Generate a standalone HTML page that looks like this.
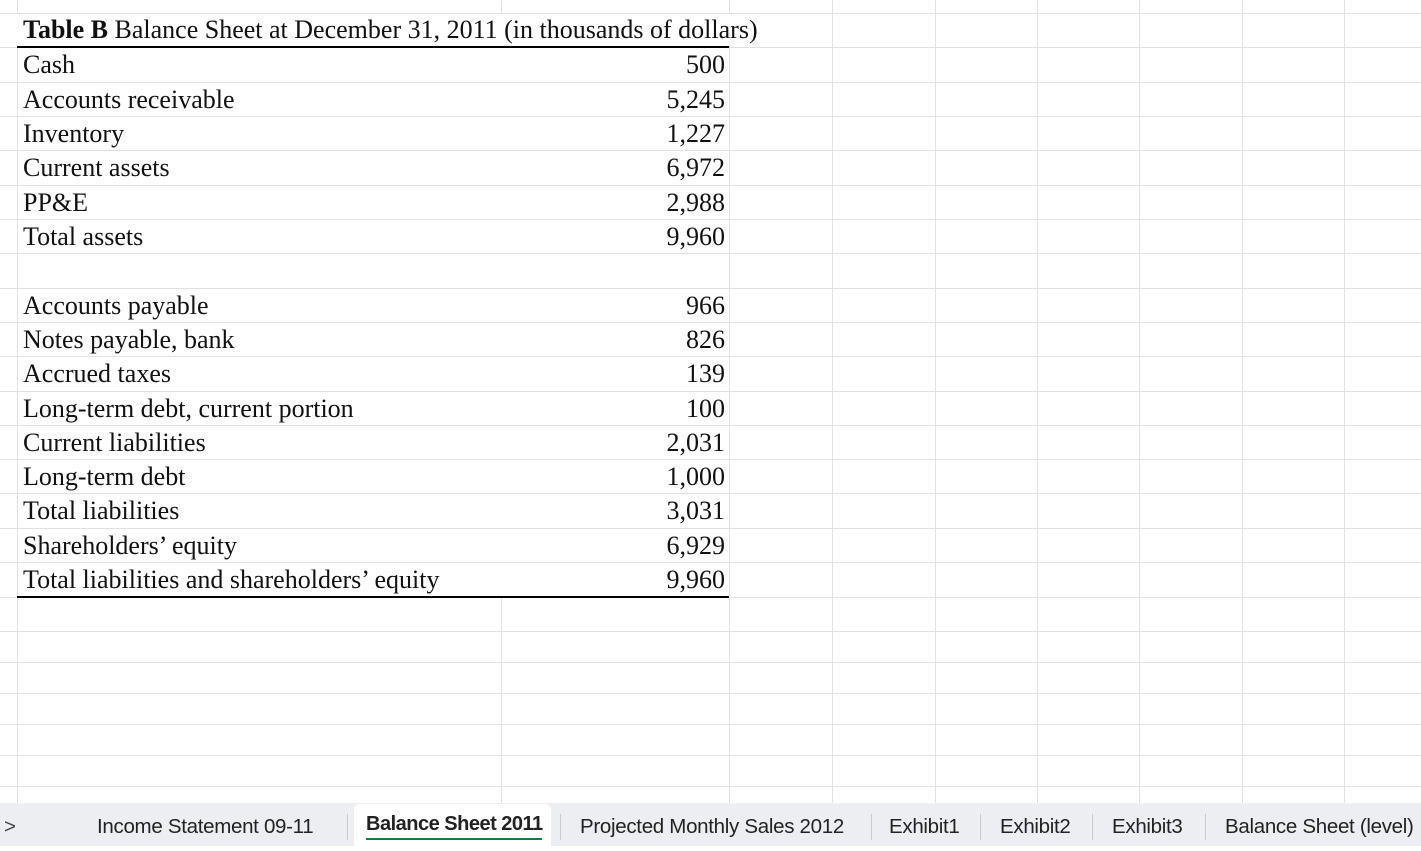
<!DOCTYPE html>
<html><head><meta charset="utf-8"><style>
body{margin:0;width:1421px;height:846px;overflow:hidden;background:#fff;position:relative;font-family:"Liberation Serif",serif;}
.h{position:absolute;left:0;width:1421px;height:1px;background:#e1e1e1}
.v{position:absolute;top:0;height:803px;width:1px;background:#e1e1e1}
.t{position:absolute;left:23px;font-size:26px;color:#111;line-height:34px;white-space:nowrap;letter-spacing:0}
.n{position:absolute;right:696px;font-size:26px;color:#111;line-height:34px;text-align:right}
.bar{position:absolute;left:0;top:803px;width:1421px;height:43px;background:#eceef2}
.tab{position:absolute;top:803px;height:43px;line-height:48px;font-family:"Liberation Sans",sans-serif;font-size:20.5px;color:#222;white-space:nowrap;letter-spacing:-0.3px}
.sep{position:absolute;top:814px;width:1px;height:26px;background:#c8cacf}
</style></head><body>
<div class="h" style="top:13px"></div><div class="h" style="top:47px"></div><div class="h" style="top:82px"></div><div class="h" style="top:116px"></div><div class="h" style="top:150px"></div><div class="h" style="top:185px"></div><div class="h" style="top:219px"></div><div class="h" style="top:253px"></div><div class="h" style="top:288px"></div><div class="h" style="top:322px"></div><div class="h" style="top:356px"></div><div class="h" style="top:391px"></div><div class="h" style="top:425px"></div><div class="h" style="top:459px"></div><div class="h" style="top:493px"></div><div class="h" style="top:528px"></div><div class="h" style="top:562px"></div><div class="h" style="top:597px"></div><div class="h" style="top:631px"></div><div class="h" style="top:662px"></div><div class="h" style="top:693px"></div><div class="h" style="top:724px"></div><div class="h" style="top:755px"></div><div class="h" style="top:786px"></div>
<div class="v" style="left:17px"></div><div class="v" style="left:501px;top:597px;height:206px"></div><div class="v" style="left:501px;height:13px"></div><div class="v" style="left:729px"></div><div class="v" style="left:832px"></div><div class="v" style="left:935px"></div><div class="v" style="left:1037px"></div><div class="v" style="left:1139px"></div><div class="v" style="left:1242px"></div><div class="v" style="left:1344px"></div>
<div style="position:absolute;left:17px;top:14px;width:760px;height:32px;background:#fff"></div>
<div style="position:absolute;left:17px;top:46px;width:712px;height:2px;background:#000"></div>
<div style="position:absolute;left:17px;top:596px;width:712px;height:2px;background:#000"></div>
<div class="t" style="top:13px"><b>Table B</b> Balance Sheet at December 31, 2011 (in thousands of dollars)</div>
<div class="t" style="top:48px">Cash</div><div class="n" style="top:48px">500</div>
<div class="t" style="top:83px">Accounts receivable</div><div class="n" style="top:83px">5,245</div>
<div class="t" style="top:117px">Inventory</div><div class="n" style="top:117px">1,227</div>
<div class="t" style="top:151px">Current assets</div><div class="n" style="top:151px">6,972</div>
<div class="t" style="top:186px">PP&amp;E</div><div class="n" style="top:186px">2,988</div>
<div class="t" style="top:220px">Total assets</div><div class="n" style="top:220px">9,960</div>
<div class="t" style="top:289px">Accounts payable</div><div class="n" style="top:289px">966</div>
<div class="t" style="top:323px">Notes payable, bank</div><div class="n" style="top:323px">826</div>
<div class="t" style="top:357px">Accrued taxes</div><div class="n" style="top:357px">139</div>
<div class="t" style="top:392px">Long-term debt, current portion</div><div class="n" style="top:392px">100</div>
<div class="t" style="top:426px">Current liabilities</div><div class="n" style="top:426px">2,031</div>
<div class="t" style="top:460px">Long-term debt</div><div class="n" style="top:460px">1,000</div>
<div class="t" style="top:494px">Total liabilities</div><div class="n" style="top:494px">3,031</div>
<div class="t" style="top:529px">Shareholders’ equity</div><div class="n" style="top:529px">6,929</div>
<div class="t" style="top:563px">Total liabilities and shareholders’ equity</div><div class="n" style="top:563px">9,960</div>
<div class="bar"></div>
<div style="position:absolute;left:354px;top:804px;width:197px;height:42px;background:#fff;border-radius:6px 6px 0 0"></div>
<div class="tab" style="left:4px;color:#444">&gt;</div>
<div class="tab" style="left:97px">Income Statement 09-11</div>
<div class="sep" style="left:347px"></div>
<div class="tab" style="left:366px;top:800px;font-weight:bold;font-size:20px;color:#222;letter-spacing:-0.5px">Balance Sheet 2011</div>
<div style="position:absolute;left:366px;top:838px;width:176px;height:2px;background:#1e7a3c"></div>
<div class="sep" style="left:560px"></div>
<div class="tab" style="left:580px">Projected Monthly Sales 2012</div>
<div class="sep" style="left:871px"></div>
<div class="tab" style="left:889px">Exhibit1</div>
<div class="sep" style="left:980px"></div>
<div class="tab" style="left:1000px">Exhibit2</div>
<div class="sep" style="left:1092px"></div>
<div class="tab" style="left:1112px">Exhibit3</div>
<div class="sep" style="left:1205px"></div>
<div class="tab" style="left:1225px">Balance Sheet (level)</div>
</body></html>
